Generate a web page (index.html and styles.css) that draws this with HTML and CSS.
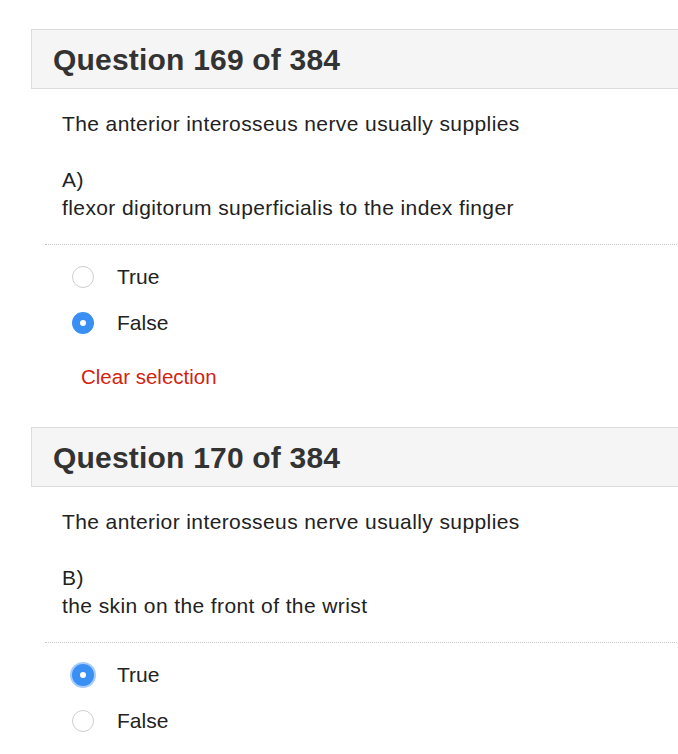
FILE: index.html
```html
<!DOCTYPE html>
<html lang="en">
<head>
<meta charset="utf-8">
<title>Quiz</title>
<link rel="stylesheet" href="styles.css">
</head>
<body>
<main class="quiz">
  <section class="question">
    <header class="q-head"><h2>Question 169 of 384</h2></header>
    <div class="q-body">
      <p class="stem">The anterior interosseus nerve usually supplies</p>
      <p class="item">A)<br>flexor digitorum superficialis to the index finger</p>
    </div>
    <div class="answers">
      <label class="opt"><input type="radio" name="q169" class="radio"><span>True</span></label>
      <label class="opt"><input type="radio" name="q169" class="radio" checked><span>False</span></label>
      <a class="clear" href="#">Clear selection</a>
    </div>
  </section>
  <section class="question">
    <header class="q-head"><h2>Question 170 of 384</h2></header>
    <div class="q-body">
      <p class="stem">The anterior interosseus nerve usually supplies</p>
      <p class="item">B)<br>the skin on the front of the wrist</p>
    </div>
    <div class="answers">
      <label class="opt"><input type="radio" name="q170" class="radio focus" checked><span>True</span></label>
      <label class="opt"><input type="radio" name="q170" class="radio"><span>False</span></label>
    </div>
  </section>
</main>
</body>
</html>
```

FILE: styles.css
```css
html, body {
  overflow: hidden;
}
body {
  margin: 0;
  background: #fff;
  font-family: "Liberation Sans", Arial, sans-serif;
  color: #222;
}
.quiz {
  width: 780px;
  margin-left: 31px;
  padding-top: 29px;
}
.question {
  margin-bottom: 36px;
}
.q-head {
  height: 58px;
  display: flex;
  align-items: center;
  padding-left: 21px;
  background: #f5f5f5;
  border: 1px solid #dcdcdc;
}
.q-head h2 {
  margin: 0;
  font-size: 30px;
  font-weight: 700;
  color: #333;
  letter-spacing: 0.2px;
  position: relative;
  top: 1px;
}
.q-body {
  padding: 21px 0 22px 31px;
  font-size: 21px;
  letter-spacing: 0.4px;
  line-height: 28px;
}
.q-body p {
  margin: 0;
}
.q-body .stem {
  margin-bottom: 28px;
}
.answers {
  margin-left: 14px;
  border-top: 1px dotted #c8c8c8;
  padding-top: 9px;
  display: flex;
  flex-direction: column;
  align-items: flex-start;
}
.opt {
  height: 46px;
  display: flex;
  align-items: center;
  padding-left: 27px;
  font-size: 21px;
  color: #222;
}
.radio {
  appearance: none;
  -webkit-appearance: none;
  width: 22px;
  height: 22px;
  margin: 0 23px 0 0;
  border-radius: 50%;
  border: 1.5px solid #cfcfcf;
  background: #fff;
  box-sizing: border-box;
}
.radio:checked {
  border: 8px solid #3a8ff5;
  background: #fff;
}
.radio.focus {
  box-shadow: 0 0 0 2px rgba(58, 143, 245, 0.45);
}
.clear {
  margin-top: 17px;
  margin-left: 36px;
  font-size: 20.5px;
  line-height: 28px;
  color: #d2230f;
  text-decoration: none;
}
```
